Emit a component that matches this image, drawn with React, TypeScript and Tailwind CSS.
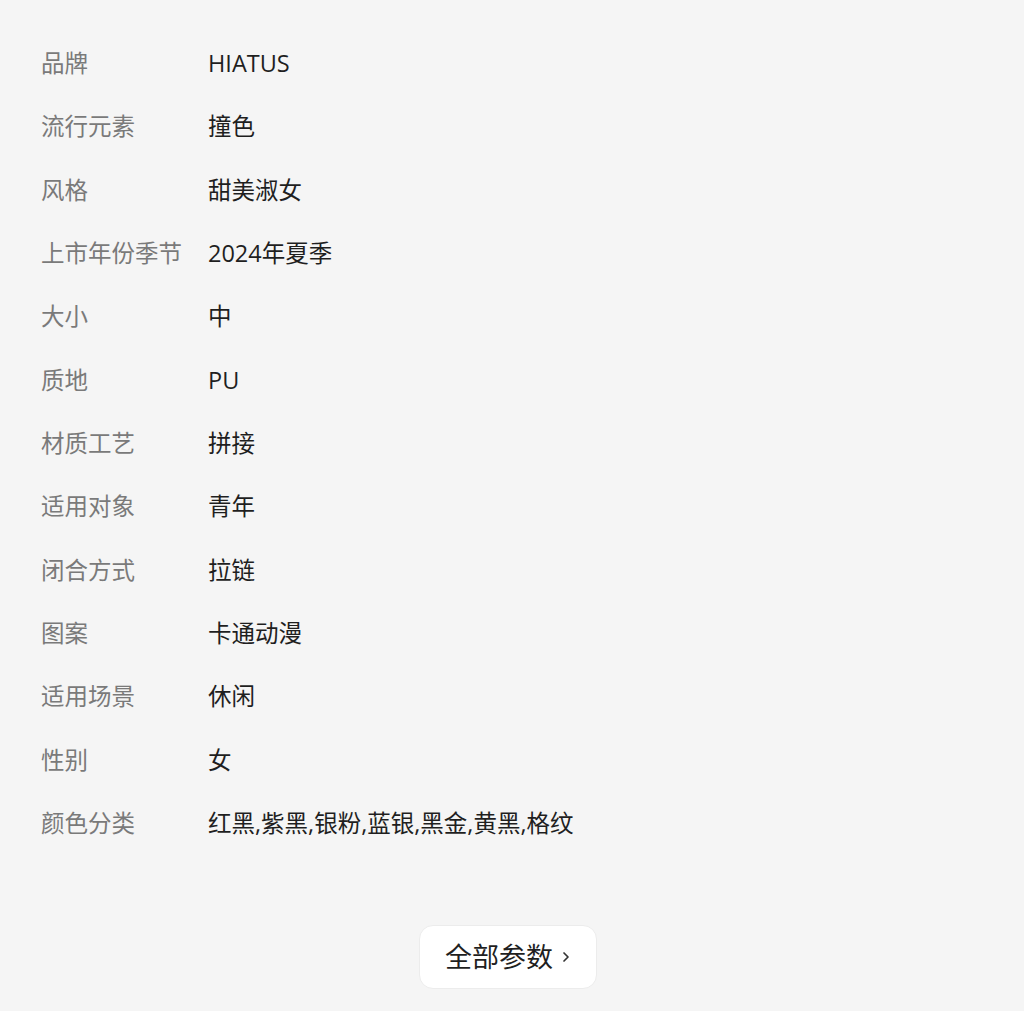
import React from "react";

const params: [string, string][] = [
  ["品牌", "HIATUS"],
  ["流行元素", "撞色"],
  ["风格", "甜美淑女"],
  ["上市年份季节", "2024年夏季"],
  ["大小", "中"],
  ["质地", "PU"],
  ["材质工艺", "拼接"],
  ["适用对象", "青年"],
  ["闭合方式", "拉链"],
  ["图案", "卡通动漫"],
  ["适用场景", "休闲"],
  ["性别", "女"],
  ["颜色分类", "红黑,紫黑,银粉,蓝银,黑金,黄黑,格纹"],
];

export default function App() {
  return (
    <div
      className="min-h-[1011px] w-full bg-[#f5f5f5] pt-[32px] pl-[41px] pr-[33px]"
      style={{ fontFamily: '"Open Sans", "Noto Sans CJK SC", sans-serif' }}
    >
      {/* Params list */}
      <div className="flex flex-col">
        {params.map(([label, value]) => (
          <div key={label} className="flex h-[63.33px] items-center text-[23.5px] leading-none">
            <span className="w-[167px] shrink-0 text-[#7a7a7a]">{label}</span>
            <span className="text-[#1f1f1f]">{value}</span>
          </div>
        ))}
      </div>

      {/* Show all button */}
      <div className="mt-[70px] flex justify-center pr-[16px]">
        <button className="flex h-[64px] w-[178px] items-center justify-center gap-[8px] rounded-[14px] border border-[#ececec] bg-white text-[27px] text-[#1f1f1f]">
          <span>全部参数</span>
          <svg width="10" height="16" viewBox="0 0 10 16" fill="none" className="-mt-[1px]">
            <path d="M3 4 L7 8 L3 12" stroke="#333" strokeWidth="1.7" strokeLinecap="round" strokeLinejoin="round" />
          </svg>
        </button>
      </div>
    </div>
  );
}
